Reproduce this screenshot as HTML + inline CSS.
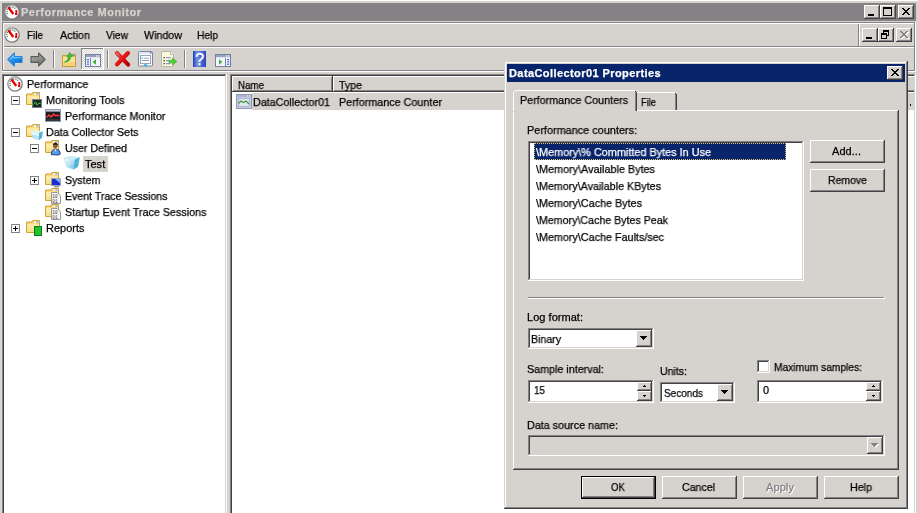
<!DOCTYPE html>
<html><head><meta charset="utf-8"><title>Performance Monitor</title>
<style>
html,body{margin:0;padding:0}
body{width:918px;height:513px;overflow:hidden;position:relative;background:#D6D3CE;font-family:"Liberation Sans",sans-serif;font-size:11px;line-height:13px}
div,span,svg{position:absolute;display:block}
span{white-space:pre;height:13px;will-change:transform;-webkit-text-stroke-width:0.25px}
</style></head><body>
<div style="left:0px;top:0px;width:918px;height:513px;background:#D6D3CE;"></div>
<div style="left:0px;top:0px;width:918px;height:1px;background:#FFFFFF;"></div>
<div style="left:1px;top:1px;width:1px;height:512px;background:#DDDAD5;"></div>
<div style="left:2px;top:3px;width:914px;height:18px;background:#848284;"></div>
<svg style="left:4px;top:4px" width="16" height="16" viewBox="0 0 16 16" ><defs><linearGradient id="pr" x1="0" y1="0" x2="1" y2="1"><stop offset="0" stop-color="#9a9a9a"/><stop offset="1" stop-color="#6a6a6a"/></linearGradient></defs>
<circle cx="8" cy="8" r="7.1" fill="#fff" stroke="url(#pr)" stroke-width="1.5"/><circle cx="8" cy="8" r="6.2" fill="none" stroke="#e9e9e9" stroke-width=".7"/>
<path d="M3.5 10.2 A4.6 4.6 0 0 1 11.8 5.4" fill="none" stroke="#4a8866" stroke-width="1.4" stroke-dasharray="1.1 1"/>
<path d="M4.4 3.3 L9.3 10" fill="none" stroke="#e60000" stroke-width="2.3"/><path d="M12.3 6 V10.2 H11" fill="none" stroke="#e60000" stroke-width="1.8"/></svg>
<span style="left:21px;top:6px;color:#D6D3CE;letter-spacing:0.519px;font-weight:bold;">Performance Monitor</span>
<div style="left:864px;top:5px;width:16px;height:14px;background:#D6D3CE;"></div>
<div style="left:864px;top:5px;width:16px;height:1px;background:#FFFFFF;"></div>
<div style="left:864px;top:5px;width:1px;height:14px;background:#FFFFFF;"></div>
<div style="left:864px;top:18px;width:16px;height:1px;background:#424142;"></div>
<div style="left:879px;top:5px;width:1px;height:14px;background:#424142;"></div>
<div style="left:865px;top:6px;width:14px;height:1px;background:#D6D3CE;"></div>
<div style="left:865px;top:6px;width:1px;height:12px;background:#D6D3CE;"></div>
<div style="left:865px;top:17px;width:14px;height:1px;background:#848284;"></div>
<div style="left:878px;top:6px;width:1px;height:12px;background:#848284;"></div>
<div style="left:868px;top:14px;width:6px;height:2px;background:#000;"></div>
<div style="left:880px;top:5px;width:16px;height:14px;background:#D6D3CE;"></div>
<div style="left:880px;top:5px;width:16px;height:1px;background:#FFFFFF;"></div>
<div style="left:880px;top:5px;width:1px;height:14px;background:#FFFFFF;"></div>
<div style="left:880px;top:18px;width:16px;height:1px;background:#424142;"></div>
<div style="left:895px;top:5px;width:1px;height:14px;background:#424142;"></div>
<div style="left:881px;top:6px;width:14px;height:1px;background:#D6D3CE;"></div>
<div style="left:881px;top:6px;width:1px;height:12px;background:#D6D3CE;"></div>
<div style="left:881px;top:17px;width:14px;height:1px;background:#848284;"></div>
<div style="left:894px;top:6px;width:1px;height:12px;background:#848284;"></div>
<div style="left:883px;top:7px;width:9px;height:9px;background:#000;"></div>
<div style="left:884px;top:9px;width:7px;height:6px;background:#D6D3CE;"></div>
<div style="left:898px;top:5px;width:16px;height:14px;background:#D6D3CE;"></div>
<div style="left:898px;top:5px;width:16px;height:1px;background:#FFFFFF;"></div>
<div style="left:898px;top:5px;width:1px;height:14px;background:#FFFFFF;"></div>
<div style="left:898px;top:18px;width:16px;height:1px;background:#424142;"></div>
<div style="left:913px;top:5px;width:1px;height:14px;background:#424142;"></div>
<div style="left:899px;top:6px;width:14px;height:1px;background:#D6D3CE;"></div>
<div style="left:899px;top:6px;width:1px;height:12px;background:#D6D3CE;"></div>
<div style="left:899px;top:17px;width:14px;height:1px;background:#848284;"></div>
<div style="left:912px;top:6px;width:1px;height:12px;background:#848284;"></div>
<svg style="left:902px;top:8px" width="8" height="7" viewBox="0 0 8 7" shape-rendering="crispEdges"><path d="M0 0h2v1h1v1h2v-1h1v-1h2v1h-1v1h-1v1h-1v1h1v1h1v1h1v1h-2v-1h-1v-1h-2v1h-1v1h-2v-1h1v-1h1v-1h1v-1h-1v-1h-1v-1h-1z" fill="#000"/></svg>
<div style="left:2px;top:22px;width:914px;height:1px;background:#848284;"></div>
<div style="left:3px;top:23px;width:912px;height:1px;background:#FFFFFF;"></div>
<div style="left:2px;top:22px;width:1px;height:49px;background:#848284;"></div>
<div style="left:3px;top:23px;width:1px;height:47px;background:#FFFFFF;"></div>
<div style="left:914px;top:23px;width:1px;height:48px;background:#848284;"></div>
<div style="left:915px;top:22px;width:1px;height:50px;background:#FFFFFF;"></div>
<div style="left:4px;top:46px;width:910px;height:1px;background:#848284;"></div>
<div style="left:3px;top:47px;width:911px;height:1px;background:#FFFFFF;"></div>
<div style="left:2px;top:70px;width:913px;height:1px;background:#848284;"></div>
<div style="left:2px;top:71px;width:914px;height:1px;background:#FFFFFF;"></div>
<div style="left:858px;top:24px;width:1px;height:22px;background:#848284;"></div>
<div style="left:859px;top:24px;width:1px;height:22px;background:#FFFFFF;"></div>
<div style="left:862px;top:28px;width:16px;height:14px;background:#D6D3CE;"></div>
<div style="left:862px;top:28px;width:16px;height:1px;background:#FFFFFF;"></div>
<div style="left:862px;top:28px;width:1px;height:14px;background:#FFFFFF;"></div>
<div style="left:862px;top:41px;width:16px;height:1px;background:#424142;"></div>
<div style="left:877px;top:28px;width:1px;height:14px;background:#424142;"></div>
<div style="left:863px;top:29px;width:14px;height:1px;background:#D6D3CE;"></div>
<div style="left:863px;top:29px;width:1px;height:12px;background:#D6D3CE;"></div>
<div style="left:863px;top:40px;width:14px;height:1px;background:#848284;"></div>
<div style="left:876px;top:29px;width:1px;height:12px;background:#848284;"></div>
<div style="left:866px;top:37px;width:6px;height:2px;background:#000;"></div>
<div style="left:878px;top:28px;width:16px;height:14px;background:#D6D3CE;"></div>
<div style="left:878px;top:28px;width:16px;height:1px;background:#FFFFFF;"></div>
<div style="left:878px;top:28px;width:1px;height:14px;background:#FFFFFF;"></div>
<div style="left:878px;top:41px;width:16px;height:1px;background:#424142;"></div>
<div style="left:893px;top:28px;width:1px;height:14px;background:#424142;"></div>
<div style="left:879px;top:29px;width:14px;height:1px;background:#D6D3CE;"></div>
<div style="left:879px;top:29px;width:1px;height:12px;background:#D6D3CE;"></div>
<div style="left:879px;top:40px;width:14px;height:1px;background:#848284;"></div>
<div style="left:892px;top:29px;width:1px;height:12px;background:#848284;"></div>
<div style="left:883px;top:30px;width:6px;height:6px;background:#000;"></div>
<div style="left:884px;top:32px;width:4px;height:3px;background:#D6D3CE;"></div>
<div style="left:881px;top:33px;width:6px;height:6px;background:#000;"></div>
<div style="left:882px;top:35px;width:4px;height:3px;background:#D6D3CE;"></div>
<div style="left:896px;top:28px;width:16px;height:14px;background:#D6D3CE;"></div>
<div style="left:896px;top:28px;width:16px;height:1px;background:#FFFFFF;"></div>
<div style="left:896px;top:28px;width:1px;height:14px;background:#FFFFFF;"></div>
<div style="left:896px;top:41px;width:16px;height:1px;background:#424142;"></div>
<div style="left:911px;top:28px;width:1px;height:14px;background:#424142;"></div>
<div style="left:897px;top:29px;width:14px;height:1px;background:#D6D3CE;"></div>
<div style="left:897px;top:29px;width:1px;height:12px;background:#D6D3CE;"></div>
<div style="left:897px;top:40px;width:14px;height:1px;background:#848284;"></div>
<div style="left:910px;top:29px;width:1px;height:12px;background:#848284;"></div>
<svg style="left:901px;top:32px" width="8" height="7" viewBox="0 0 8 7" shape-rendering="crispEdges"><path d="M0 0h2v1h1v1h2v-1h1v-1h2v1h-1v1h-1v1h-1v1h1v1h1v1h1v1h-2v-1h-1v-1h-2v1h-1v1h-2v-1h1v-1h1v-1h1v-1h-1v-1h-1v-1h-1z" fill="#FFFFFF"/></svg>
<svg style="left:900px;top:31px" width="8" height="7" viewBox="0 0 8 7" shape-rendering="crispEdges"><path d="M0 0h2v1h1v1h2v-1h1v-1h2v1h-1v1h-1v1h-1v1h1v1h1v1h1v1h-2v-1h-1v-1h-2v1h-1v1h-2v-1h1v-1h1v-1h1v-1h-1v-1h-1v-1h-1z" fill="#848284"/></svg>
<svg style="left:4px;top:27px" width="16" height="16" viewBox="0 0 16 16" ><defs><linearGradient id="pr" x1="0" y1="0" x2="1" y2="1"><stop offset="0" stop-color="#9a9a9a"/><stop offset="1" stop-color="#6a6a6a"/></linearGradient></defs>
<circle cx="8" cy="8" r="7.1" fill="#fff" stroke="url(#pr)" stroke-width="1.5"/><circle cx="8" cy="8" r="6.2" fill="none" stroke="#e9e9e9" stroke-width=".7"/>
<path d="M3.5 10.2 A4.6 4.6 0 0 1 11.8 5.4" fill="none" stroke="#4a8866" stroke-width="1.4" stroke-dasharray="1.1 1"/>
<path d="M4.4 3.3 L9.3 10" fill="none" stroke="#e60000" stroke-width="2.3"/><path d="M12.3 6 V10.2 H11" fill="none" stroke="#e60000" stroke-width="1.8"/></svg>
<span style="left:27px;top:29px;color:#000;transform-origin:0 0;transform:scaleX(0.9022);">File</span>
<span style="left:60px;top:29px;color:#000;transform-origin:0 0;transform:scaleX(0.9811);">Action</span>
<span style="left:106px;top:29px;color:#000;transform-origin:0 0;transform:scaleX(0.9300);">View</span>
<span style="left:144px;top:29px;color:#000;transform-origin:0 0;transform:scaleX(0.9712);">Window</span>
<span style="left:197px;top:29px;color:#000;transform-origin:0 0;transform:scaleX(0.9282);">Help</span>
<svg style="left:7px;top:52px" width="16" height="15" viewBox="0 0 16 15" ><defs><linearGradient id="gb" x1="0" y1="0" x2="0.6" y2="1"><stop offset="0" stop-color="#8fd8ff"/><stop offset=".55" stop-color="#1f93f0"/><stop offset="1" stop-color="#0a5ec4"/></linearGradient></defs>
<path d="M0.8 7.5 L7.4 1 V4.6 H15 V10.4 H7.4 V14 Z" fill="url(#gb)" stroke="#2a86d8" stroke-width="1.1" stroke-linejoin="round"/><path d="M2.6 7.5 L6.4 3.8 V5.7 H13.8" fill="none" stroke="#a8e2ff" stroke-width=".8" opacity=".8"/></svg>
<svg style="left:30px;top:52px" width="16" height="15" viewBox="0 0 16 15" ><defs><linearGradient id="gg" x1="0" y1="0" x2="0.4" y2="1"><stop offset="0" stop-color="#c4c4c4"/><stop offset=".6" stop-color="#8c8c8c"/><stop offset="1" stop-color="#767676"/></linearGradient></defs>
<path d="M15.2 7.5 L8.6 1 V4.6 H1 V10.4 H8.6 V14 Z" fill="url(#gg)" stroke="#5a5a5a" stroke-width="1.1" stroke-linejoin="round"/></svg>
<div style="left:53px;top:50px;width:1px;height:18px;background:#848284;"></div>
<div style="left:54px;top:50px;width:1px;height:18px;background:#FFFFFF;"></div>
<svg style="left:62px;top:51px" width="16" height="17" viewBox="0 0 16 17" ><path d="M0.5 4.5 H8 L9 3.3 H13.5 V15.5 H0.5Z" fill="#f1cb66" stroke="#c99a35"/><path d="M1 6 H13 V15 H1Z" fill="#f9e29a"/><path d="M1 11 H13 V15 H1Z" fill="#f4d57e"/>
<rect x="10" y="4" width="2.6" height="1.3" fill="#4a90e2"/>
<path d="M2.4 11 C4.8 10.2 6.2 8.6 6.4 5.8 L4.8 6 L7.6 1.4 L10.2 5.4 L8.8 5.4 C8.8 9 6 11.2 2.4 11Z" fill="#3cc43c" stroke="#229922" stroke-width=".6"/></svg>
<div style="left:81px;top:48px;width:23px;height:22px;background-color:#D6D3CE;background-image:conic-gradient(#fff 25%,#D6D3CE 0 50%,#fff 0 75%,#D6D3CE 0);background-size:2px 2px"></div>
<div style="left:81px;top:48px;width:23px;height:1px;background:#848284;"></div>
<div style="left:81px;top:48px;width:1px;height:22px;background:#848284;"></div>
<div style="left:81px;top:69px;width:23px;height:1px;background:#FFFFFF;"></div>
<div style="left:103px;top:48px;width:1px;height:22px;background:#FFFFFF;"></div>
<svg style="left:85px;top:54px" width="16" height="13" viewBox="0 0 16 13" ><rect x="0.5" y="0.5" width="15" height="12" fill="#f4f4fa" stroke="#74829f"/><rect x="1" y="1" width="14" height="2.2" fill="#96a3bf"/><rect x="1" y="3.2" width="14" height="1" fill="#dfe4ee"/>
<rect x="11" y="1.4" width="1.2" height="1.2" fill="#fff"/><rect x="13" y="1.4" width="1.2" height="1.2" fill="#fff"/><line x1="5.5" y1="4" x2="5.5" y2="12" stroke="#74829f"/><rect x="1.8" y="5" width="2.2" height="1.3" fill="#3d7fd6"/><rect x="1.8" y="7.3" width="2.2" height="1.3" fill="#3d7fd6"/><rect x="1.8" y="9.6" width="2.2" height="1.3" fill="#3d7fd6"/><path d="M11 5.2 L7.6 8 L11 10.8Z" fill="#35b535"/></svg>
<div style="left:107px;top:50px;width:1px;height:18px;background:#848284;"></div>
<div style="left:108px;top:50px;width:1px;height:18px;background:#FFFFFF;"></div>
<svg style="left:114px;top:50px" width="18" height="18" viewBox="0 0 18 18" ><defs><linearGradient id="rx" x1="0" y1="0" x2="1" y2="1"><stop offset="0" stop-color="#ff5a5a"/><stop offset=".5" stop-color="#ee1010"/><stop offset="1" stop-color="#a80000"/></linearGradient></defs>
<path d="M3 3.2 L14.2 14.6 M14 3 L3 14.4" fill="none" stroke="#b40a0a" stroke-width="4" stroke-linecap="round"/><path d="M3 3.2 L14.2 14.6 M14 3 L3 14.4" fill="none" stroke="url(#rx)" stroke-width="2.9" stroke-linecap="round"/></svg>
<svg style="left:138px;top:51px" width="15" height="16" viewBox="0 0 15 16" ><rect x="0.5" y="0.5" width="14" height="14.5" rx="1" fill="#fafafc" stroke="#7a86a2"/><rect x="1" y="1" width="13" height="2" fill="#e2e6ef"/><rect x="12" y="1" width="1.5" height="1.5" fill="#5a6fb0"/>
<rect x="2.5" y="4.5" width="10" height="8" fill="#fff" stroke="#9aa3b8"/><rect x="3.5" y="6.5" width="1.3" height="1.3" fill="#18b4ff"/><rect x="6" y="6.7" width="5" height="1" fill="#9aa3b8"/><rect x="4" y="9" width="7" height="1" fill="#9aa3b8"/><rect x="6" y="13.3" width="3" height="1.7" fill="#18b4ff"/></svg>
<svg style="left:161px;top:51px" width="17" height="16" viewBox="0 0 17 16" ><path d="M0.5 0.5 h9 l3 3 v12 h-12z" fill="#fbf7dc" stroke="#b9b9a8"/><path d="M9.5 0.5 v3 h3" fill="#fff" stroke="#b9b9a8"/>
<rect x="2.5" y="6" width="1.3" height="1.3" fill="#333"/><rect x="2.5" y="9" width="1.3" height="1.3" fill="#333"/><rect x="2.5" y="12" width="1.3" height="1.3" fill="#333"/>
<rect x="5" y="6.2" width="4.5" height="1" fill="#7a7fb8"/><rect x="5" y="9.2" width="3" height="1" fill="#7a7fb8"/><rect x="5" y="12.2" width="4.5" height="1" fill="#7a7fb8"/>
<path d="M8 9.2 h3.6 v-2.2 l4.2 3.5 l-4.2 3.5 v-2.2 h-3.6z" fill="#4fd33a" stroke="#2fa51f" stroke-width=".6"/></svg>
<div style="left:184px;top:50px;width:1px;height:18px;background:#848284;"></div>
<div style="left:185px;top:50px;width:1px;height:18px;background:#FFFFFF;"></div>
<svg style="left:193px;top:51px" width="13" height="16" viewBox="0 0 13 16" ><defs><linearGradient id="gh" x1="0" y1="0" x2="1" y2="0"><stop offset="0" stop-color="#1d3fb0"/><stop offset=".3" stop-color="#6f8fe6"/><stop offset="1" stop-color="#2347c0"/></linearGradient></defs>
<rect width="13" height="16" fill="url(#gh)"/><text x="6.6" y="14" font-family="Liberation Sans" font-weight="normal" font-size="16.5" fill="#fff" stroke="#fff" stroke-width=".35" text-anchor="middle">?</text></svg>
<svg style="left:215px;top:54px" width="16" height="13" viewBox="0 0 16 13" ><rect x="0.5" y="0.5" width="15" height="12" fill="#f4f4fa" stroke="#74829f"/><rect x="1" y="1" width="14" height="2.2" fill="#96a3bf"/><rect x="1" y="3.2" width="14" height="1" fill="#dfe4ee"/>
<rect x="11" y="1.4" width="1.2" height="1.2" fill="#fff"/><rect x="13" y="1.4" width="1.2" height="1.2" fill="#fff"/><line x1="10.5" y1="4" x2="10.5" y2="12" stroke="#74829f"/><rect x="12" y="5" width="2.2" height="1.3" fill="#3d7fd6"/><rect x="12" y="7.3" width="2.2" height="1.3" fill="#3d7fd6"/><rect x="12" y="9.6" width="2.2" height="1.3" fill="#3d7fd6"/><path d="M4 5.2 L7.4 8 L4 10.8Z" fill="#35b535"/></svg>
<div style="left:2px;top:74px;width:225px;height:460px;background:#FFFFFF;"></div>
<div style="left:2px;top:74px;width:225px;height:1px;background:#848284;"></div>
<div style="left:2px;top:74px;width:1px;height:460px;background:#848284;"></div>
<div style="left:2px;top:533px;width:225px;height:1px;background:#FFFFFF;"></div>
<div style="left:226px;top:74px;width:1px;height:460px;background:#FFFFFF;"></div>
<div style="left:3px;top:75px;width:223px;height:1px;background:#424142;"></div>
<div style="left:3px;top:75px;width:1px;height:458px;background:#424142;"></div>
<div style="left:3px;top:532px;width:223px;height:1px;background:#D6D3CE;"></div>
<div style="left:225px;top:75px;width:1px;height:458px;background:#D6D3CE;"></div>
<div style="left:230px;top:74px;width:686px;height:460px;background:#FFFFFF;"></div>
<div style="left:230px;top:74px;width:686px;height:1px;background:#848284;"></div>
<div style="left:230px;top:74px;width:1px;height:460px;background:#848284;"></div>
<div style="left:230px;top:533px;width:686px;height:1px;background:#FFFFFF;"></div>
<div style="left:915px;top:74px;width:1px;height:460px;background:#FFFFFF;"></div>
<div style="left:231px;top:75px;width:684px;height:1px;background:#424142;"></div>
<div style="left:231px;top:75px;width:1px;height:458px;background:#424142;"></div>
<div style="left:231px;top:532px;width:684px;height:1px;background:#D6D3CE;"></div>
<div style="left:914px;top:75px;width:1px;height:458px;background:#D6D3CE;"></div>
<svg style="left:7px;top:76px" width="16" height="16" viewBox="0 0 16 16" ><defs><linearGradient id="pr" x1="0" y1="0" x2="1" y2="1"><stop offset="0" stop-color="#9a9a9a"/><stop offset="1" stop-color="#6a6a6a"/></linearGradient></defs>
<circle cx="8" cy="8" r="7.1" fill="#fff" stroke="url(#pr)" stroke-width="1.5"/><circle cx="8" cy="8" r="6.2" fill="none" stroke="#e9e9e9" stroke-width=".7"/>
<path d="M3.5 10.2 A4.6 4.6 0 0 1 11.8 5.4" fill="none" stroke="#4a8866" stroke-width="1.4" stroke-dasharray="1.1 1"/>
<path d="M4.4 3.3 L9.3 10" fill="none" stroke="#e60000" stroke-width="2.3"/><path d="M12.3 6 V10.2 H11" fill="none" stroke="#e60000" stroke-width="1.8"/></svg>
<span style="left:27px;top:78px;color:#000;transform-origin:0 0;transform:scaleX(0.9748);">Performance</span>
<div style="left:11px;top:96px;width:9px;height:9px;background:#FFFFFF;"></div>
<div style="left:11px;top:96px;width:9px;height:1px;background:#848284;"></div>
<div style="left:11px;top:96px;width:1px;height:9px;background:#848284;"></div>
<div style="left:11px;top:104px;width:9px;height:1px;background:#848284;"></div>
<div style="left:19px;top:96px;width:1px;height:9px;background:#848284;"></div>
<div style="left:13px;top:100px;width:5px;height:1px;background:#000;"></div>
<svg style="left:26px;top:92px" width="16" height="16" viewBox="0 0 16 16" ><path d="M0.5 2 H6 L6.8 0.5 H13.5 V12.5 H0.5 Z" fill="#f4cf6a" stroke="#d2a338"/>
<rect x="8.4" y="1.3" width="4.4" height="1.7" fill="#fff"/><rect x="10.2" y="1.5" width="2.2" height="1.1" fill="#3a8ee6"/>
<path d="M1 3.6 H13 V12 H1Z" fill="#fbe9a6"/><path d="M1 8.5 H13 V12 H1Z" fill="#f8df8e"/></svg>
<svg style="left:32px;top:99px" width="10" height="9" viewBox="0 0 10 9" ><rect x=".5" y=".5" width="9" height="8" fill="#1d2a22" stroke="#6f7f8f"/><path d="M1.5 5.5 L3.5 3 L5 6 L6.5 4.5 L8.5 4.5" fill="none" stroke="#35d24a" stroke-width="1"/></svg>
<span style="left:46px;top:94px;color:#000;transform-origin:0 0;transform:scaleX(0.9811);">Monitoring Tools</span>
<svg style="left:45px;top:109px" width="16" height="13" viewBox="0 0 16 13" ><rect x=".5" y=".5" width="15" height="12" fill="#1d1d22" stroke="#8e9bb5"/><rect x="1" y="1" width="14" height="1.6" fill="#c8d0e0"/><path d="M1.5 8.5 L4 6 L6 8 L8.5 5 L10 6.5 L14.5 6.5" fill="none" stroke="#ff3a3a" stroke-width="1.3"/><rect x="2" y="10.5" width="12" height="1" fill="#555"/></svg>
<span style="left:65px;top:110px;color:#000;transform-origin:0 0;transform:scaleX(0.9774);">Performance Monitor</span>
<div style="left:11px;top:128px;width:9px;height:9px;background:#FFFFFF;"></div>
<div style="left:11px;top:128px;width:9px;height:1px;background:#848284;"></div>
<div style="left:11px;top:128px;width:1px;height:9px;background:#848284;"></div>
<div style="left:11px;top:136px;width:9px;height:1px;background:#848284;"></div>
<div style="left:19px;top:128px;width:1px;height:9px;background:#848284;"></div>
<div style="left:13px;top:132px;width:5px;height:1px;background:#000;"></div>
<svg style="left:26px;top:124px" width="16" height="16" viewBox="0 0 16 16" ><path d="M0.5 2 H6 L6.8 0.5 H13.5 V12.5 H0.5 Z" fill="#f4cf6a" stroke="#d2a338"/>
<rect x="8.4" y="1.3" width="4.4" height="1.7" fill="#fff"/><rect x="10.2" y="1.5" width="2.2" height="1.1" fill="#3a8ee6"/>
<path d="M1 3.6 H13 V12 H1Z" fill="#fbe9a6"/><path d="M1 8.5 H13 V12 H1Z" fill="#f8df8e"/></svg>
<svg style="left:31px;top:130px" width="12" height="11" viewBox="0 0 12 11" ><path d="M0 1.6 L4.5 0.5 L12 1.2 L8 3Z" fill="#dff4fb"/><path d="M8 3 L12 1.2 L10.8 8 L7.6 10.2Z" fill="#4fb0d6"/><path d="M0 1.6 L8 3 L7.6 10.2 L1.8 8.2Z" fill="#b5e3f3"/><path d="M0 1.6 L8 3 L7.8 6 L0.8 4.5Z" fill="#e6f7fc"/></svg>
<span style="left:46px;top:126px;color:#000;transform-origin:0 0;transform:scaleX(0.9750);">Data Collector Sets</span>
<div style="left:30px;top:144px;width:9px;height:9px;background:#FFFFFF;"></div>
<div style="left:30px;top:144px;width:9px;height:1px;background:#848284;"></div>
<div style="left:30px;top:144px;width:1px;height:9px;background:#848284;"></div>
<div style="left:30px;top:152px;width:9px;height:1px;background:#848284;"></div>
<div style="left:38px;top:144px;width:1px;height:9px;background:#848284;"></div>
<div style="left:32px;top:148px;width:5px;height:1px;background:#000;"></div>
<svg style="left:45px;top:140px" width="16" height="16" viewBox="0 0 16 16" ><path d="M0.5 2 H6 L6.8 0.5 H13.5 V12.5 H0.5 Z" fill="#f4cf6a" stroke="#d2a338"/>
<rect x="8.4" y="1.3" width="4.4" height="1.7" fill="#fff"/><rect x="10.2" y="1.5" width="2.2" height="1.1" fill="#3a8ee6"/>
<path d="M1 3.6 H13 V12 H1Z" fill="#fbe9a6"/><path d="M1 8.5 H13 V12 H1Z" fill="#f8df8e"/></svg>
<svg style="left:50px;top:141px" width="11" height="15" viewBox="0 0 11 15" ><ellipse cx="5.3" cy="4.6" rx="2.3" ry="2.9" fill="#8a5a3c"/><path d="M3 3.4 Q5.3 -0.6 7.8 3.6 L7.4 4.4 Q5 2.6 3.2 4.2Z" fill="#1c1c1c"/><path d="M1.3 13.6 Q1.3 8.2 5.5 8.2 Q9.8 8.2 10.3 12 Q10.3 13.6 8.8 14 Z" fill="#5a9be6" stroke="#15306e" stroke-width=".9"/><path d="M4.3 8.4 L5.4 10.6 L6.6 8.4Z" fill="#fff"/></svg>
<span style="left:65px;top:142px;color:#000;transform-origin:0 0;transform:scaleX(0.9657);">User Defined</span>
<svg style="left:64px;top:156px" width="16" height="16" viewBox="0 0 16 16" ><defs><linearGradient id="cf" x1="0" y1="0" x2="1" y2="1"><stop offset="0" stop-color="#f4fbfe"/><stop offset=".45" stop-color="#c4e8f5"/><stop offset="1" stop-color="#6cc2e2"/></linearGradient></defs>
<path d="M0.5 2.2 L6 0.8 L15.5 1.6 L13.9 10.6 L9.8 13.2 L2.6 10.6Z" fill="#bfe6f4" stroke="#9ad6ea" stroke-width=".8"/><path d="M0.5 2.2 L6 0.8 L15.5 1.6 L10.4 3.8 Z" fill="#cdecf7"/><path d="M10.4 3.8 L15.5 1.6 L13.9 10.6 L9.8 13.2 Z" fill="#4fb0d6"/><path d="M0.5 2.2 L10.4 3.8 L9.8 13.2 L2.6 10.6Z" fill="url(#cf)"/></svg>
<div style="left:83px;top:156px;width:25px;height:16px;background:#D6D3CE;"></div>
<span style="left:85px;top:158px;color:#000;letter-spacing:0.003px;">Test</span>
<div style="left:30px;top:176px;width:9px;height:9px;background:#FFFFFF;"></div>
<div style="left:30px;top:176px;width:9px;height:1px;background:#848284;"></div>
<div style="left:30px;top:176px;width:1px;height:9px;background:#848284;"></div>
<div style="left:30px;top:184px;width:9px;height:1px;background:#848284;"></div>
<div style="left:38px;top:176px;width:1px;height:9px;background:#848284;"></div>
<div style="left:32px;top:180px;width:5px;height:1px;background:#000;"></div>
<div style="left:34px;top:178px;width:1px;height:5px;background:#000;"></div>
<svg style="left:45px;top:172px" width="16" height="16" viewBox="0 0 16 16" ><path d="M0.5 2 H6 L6.8 0.5 H13.5 V12.5 H0.5 Z" fill="#f4cf6a" stroke="#d2a338"/>
<rect x="8.4" y="1.3" width="4.4" height="1.7" fill="#fff"/><rect x="10.2" y="1.5" width="2.2" height="1.1" fill="#3a8ee6"/>
<path d="M1 3.6 H13 V12 H1Z" fill="#fbe9a6"/><path d="M1 8.5 H13 V12 H1Z" fill="#f8df8e"/></svg>
<svg style="left:51px;top:178px" width="11" height="10" viewBox="0 0 11 10" ><rect x=".5" y=".5" width="9" height="7" fill="#1a2fd0" stroke="#9aa3b8"/><path d="M4 1 L9 1 L9 5Z" fill="#8fb4ff"/><rect x="3" y="8" width="5" height="1.5" fill="#9a9a9a"/></svg>
<span style="left:65px;top:174px;color:#000;transform-origin:0 0;transform:scaleX(0.9649);">System</span>
<svg style="left:45px;top:188px" width="16" height="16" viewBox="0 0 16 16" ><path d="M0.5 2 H6 L6.8 0.5 H13.5 V12.5 H0.5 Z" fill="#f4cf6a" stroke="#d2a338"/>
<rect x="8.4" y="1.3" width="4.4" height="1.7" fill="#fff"/><rect x="10.2" y="1.5" width="2.2" height="1.1" fill="#3a8ee6"/>
<path d="M1 3.6 H13 V12 H1Z" fill="#fbe9a6"/><path d="M1 8.5 H13 V12 H1Z" fill="#f8df8e"/></svg>
<svg style="left:51px;top:192px" width="10" height="12" viewBox="0 0 10 12" ><path d="M.5 .5 h6 l3 3 v8 h-9z" fill="#f4f4f4" stroke="#9a9a9a"/><text x="1.3" y="6" font-size="4.5" font-family="Liberation Mono" fill="#444">10</text><text x="1.3" y="10.5" font-size="4.5" font-family="Liberation Mono" fill="#444">01</text></svg>
<span style="left:65px;top:190px;color:#000;transform-origin:0 0;transform:scaleX(0.9625);">Event Trace Sessions</span>
<svg style="left:45px;top:204px" width="16" height="16" viewBox="0 0 16 16" ><path d="M0.5 2 H6 L6.8 0.5 H13.5 V12.5 H0.5 Z" fill="#f4cf6a" stroke="#d2a338"/>
<rect x="8.4" y="1.3" width="4.4" height="1.7" fill="#fff"/><rect x="10.2" y="1.5" width="2.2" height="1.1" fill="#3a8ee6"/>
<path d="M1 3.6 H13 V12 H1Z" fill="#fbe9a6"/><path d="M1 8.5 H13 V12 H1Z" fill="#f8df8e"/></svg>
<svg style="left:51px;top:208px" width="10" height="12" viewBox="0 0 10 12" ><path d="M.5 .5 h6 l3 3 v8 h-9z" fill="#f4f4f4" stroke="#9a9a9a"/><text x="1.3" y="6" font-size="4.5" font-family="Liberation Mono" fill="#444">10</text><text x="1.3" y="10.5" font-size="4.5" font-family="Liberation Mono" fill="#444">01</text></svg>
<span style="left:65px;top:206px;color:#000;transform-origin:0 0;transform:scaleX(0.9757);">Startup Event Trace Sessions</span>
<div style="left:11px;top:224px;width:9px;height:9px;background:#FFFFFF;"></div>
<div style="left:11px;top:224px;width:9px;height:1px;background:#848284;"></div>
<div style="left:11px;top:224px;width:1px;height:9px;background:#848284;"></div>
<div style="left:11px;top:232px;width:9px;height:1px;background:#848284;"></div>
<div style="left:19px;top:224px;width:1px;height:9px;background:#848284;"></div>
<div style="left:13px;top:228px;width:5px;height:1px;background:#000;"></div>
<div style="left:15px;top:226px;width:1px;height:5px;background:#000;"></div>
<svg style="left:26px;top:220px" width="16" height="16" viewBox="0 0 16 16" ><path d="M0.5 2 H6 L6.8 0.5 H13.5 V12.5 H0.5 Z" fill="#f4cf6a" stroke="#d2a338"/>
<rect x="8.4" y="1.3" width="4.4" height="1.7" fill="#fff"/><rect x="10.2" y="1.5" width="2.2" height="1.1" fill="#3a8ee6"/>
<path d="M1 3.6 H13 V12 H1Z" fill="#fbe9a6"/><path d="M1 8.5 H13 V12 H1Z" fill="#f8df8e"/></svg>
<svg style="left:34px;top:226px" width="8" height="10" viewBox="0 0 8 10" ><rect x=".5" y=".5" width="7" height="9" fill="#1fc32f" stroke="#0d7a18"/></svg>
<span style="left:46px;top:222px;color:#000;transform-origin:0 0;transform:scaleX(0.9966);">Reports</span>
<div style="left:232px;top:76px;width:101px;height:16px;background:#D6D3CE;"></div>
<div style="left:232px;top:76px;width:101px;height:1px;background:#FFFFFF;"></div>
<div style="left:232px;top:76px;width:1px;height:16px;background:#FFFFFF;"></div>
<div style="left:232px;top:91px;width:101px;height:1px;background:#424142;"></div>
<div style="left:332px;top:76px;width:1px;height:16px;background:#424142;"></div>
<div style="left:233px;top:90px;width:99px;height:1px;background:#848284;"></div>
<div style="left:331px;top:77px;width:1px;height:14px;background:#848284;"></div>
<span style="left:238px;top:79px;color:#000;transform-origin:0 0;transform:scaleX(0.8860);">Name</span>
<div style="left:333px;top:76px;width:600px;height:16px;background:#D6D3CE;"></div>
<div style="left:333px;top:76px;width:600px;height:1px;background:#FFFFFF;"></div>
<div style="left:333px;top:76px;width:1px;height:16px;background:#FFFFFF;"></div>
<div style="left:333px;top:91px;width:600px;height:1px;background:#424142;"></div>
<div style="left:932px;top:76px;width:1px;height:16px;background:#424142;"></div>
<div style="left:334px;top:90px;width:598px;height:1px;background:#848284;"></div>
<div style="left:931px;top:77px;width:1px;height:14px;background:#848284;"></div>
<span style="left:339px;top:79px;color:#000;transform-origin:0 0;transform:scaleX(0.9640);">Type</span>
<div style="left:914px;top:76px;width:1px;height:17px;background:#D6D3CE;"></div>
<div style="left:915px;top:76px;width:1px;height:17px;background:#FFFFFF;"></div>
<div style="left:916px;top:76px;width:2px;height:17px;background:#D6D3CE;"></div>
<div style="left:252px;top:93px;width:662px;height:17px;background:#D6D3CE;"></div>
<div style="left:910px;top:104px;width:1px;height:2px;background:#000;"></div>
<svg style="left:236px;top:94px" width="16" height="16" viewBox="0 0 16 16" ><rect x=".5" y=".5" width="15" height="14" fill="#c6cde0" stroke="#8e9bb5"/><rect x="1" y="1" width="14" height="2" fill="#aab4cf"/><rect x="2.5" y="4.5" width="11" height="8" fill="#d8deec" stroke="#9aa6c4" stroke-width=".6"/><path d="M5 5v7M8 5v7M11 5v7" stroke="#eef1f8" stroke-width="1"/><path d="M2.5 9.5 L5 7 L7.5 8.5 L10 7 L13 10" fill="none" stroke="#3e9a3e" stroke-width="1.2"/><rect x="11" y="1.4" width="1" height="1" fill="#fff"/><rect x="13" y="1.4" width="1" height="1" fill="#fff"/></svg>
<span style="left:253px;top:96px;color:#000;transform-origin:0 0;transform:scaleX(0.9762);">DataCollector01</span>
<span style="left:339px;top:96px;color:#000;transform-origin:0 0;transform:scaleX(0.9793);">Performance Counter</span>
<div style="left:504px;top:61px;width:404px;height:448px;background:#D6D3CE;"></div>
<div style="left:504px;top:61px;width:404px;height:1px;background:#D6D3CE;"></div>
<div style="left:504px;top:61px;width:1px;height:448px;background:#D6D3CE;"></div>
<div style="left:504px;top:508px;width:404px;height:1px;background:#424142;"></div>
<div style="left:907px;top:61px;width:1px;height:448px;background:#424142;"></div>
<div style="left:505px;top:62px;width:402px;height:1px;background:#FFFFFF;"></div>
<div style="left:505px;top:62px;width:1px;height:446px;background:#FFFFFF;"></div>
<div style="left:505px;top:507px;width:402px;height:1px;background:#848284;"></div>
<div style="left:906px;top:62px;width:1px;height:446px;background:#848284;"></div>
<div style="left:507px;top:64px;width:398px;height:18px;background:#08246B;"></div>
<span style="left:509px;top:67px;color:#fff;letter-spacing:0.415px;font-weight:bold;">DataCollector01 Properties</span>
<div style="left:887px;top:66px;width:16px;height:14px;background:#D6D3CE;"></div>
<div style="left:887px;top:66px;width:16px;height:1px;background:#FFFFFF;"></div>
<div style="left:887px;top:66px;width:1px;height:14px;background:#FFFFFF;"></div>
<div style="left:887px;top:79px;width:16px;height:1px;background:#424142;"></div>
<div style="left:902px;top:66px;width:1px;height:14px;background:#424142;"></div>
<div style="left:888px;top:67px;width:14px;height:1px;background:#D6D3CE;"></div>
<div style="left:888px;top:67px;width:1px;height:12px;background:#D6D3CE;"></div>
<div style="left:888px;top:78px;width:14px;height:1px;background:#848284;"></div>
<div style="left:901px;top:67px;width:1px;height:12px;background:#848284;"></div>
<svg style="left:891px;top:69px" width="8" height="7" viewBox="0 0 8 7" shape-rendering="crispEdges"><path d="M0 0h2v1h1v1h2v-1h1v-1h2v1h-1v1h-1v1h-1v1h1v1h1v1h1v1h-2v-1h-1v-1h-2v1h-1v1h-2v-1h1v-1h1v-1h1v-1h-1v-1h-1v-1h-1z" fill="#000"/></svg>
<div style="left:513px;top:110px;width:386px;height:1px;background:#FFFFFF;"></div>
<div style="left:513px;top:110px;width:1px;height:360px;background:#FFFFFF;"></div>
<div style="left:513px;top:469px;width:386px;height:1px;background:#424142;"></div>
<div style="left:898px;top:110px;width:1px;height:360px;background:#424142;"></div>
<div style="left:514px;top:111px;width:384px;height:1px;background:#D6D3CE;"></div>
<div style="left:514px;top:111px;width:1px;height:358px;background:#D6D3CE;"></div>
<div style="left:514px;top:468px;width:384px;height:1px;background:#848284;"></div>
<div style="left:897px;top:111px;width:1px;height:358px;background:#848284;"></div>
<div style="left:637px;top:92px;width:38px;height:1px;background:#FFFFFF;"></div>
<div style="left:675px;top:94px;width:1px;height:16px;background:#848284;"></div>
<div style="left:676px;top:94px;width:1px;height:16px;background:#424142;"></div>
<div style="left:675px;top:93px;width:1px;height:1px;background:#424142;"></div>
<span style="left:641px;top:96px;color:#000;transform-origin:0 0;transform:scaleX(0.8458);">File</span>
<div style="left:513px;top:90px;width:124px;height:22px;background:#D6D3CE;"></div>
<div style="left:515px;top:90px;width:120px;height:1px;background:#FFFFFF;"></div>
<div style="left:513px;top:92px;width:1px;height:19px;background:#FFFFFF;"></div>
<div style="left:514px;top:91px;width:1px;height:1px;background:#FFFFFF;"></div>
<div style="left:635px;top:92px;width:1px;height:19px;background:#848284;"></div>
<div style="left:636px;top:92px;width:1px;height:19px;background:#424142;"></div>
<div style="left:635px;top:91px;width:1px;height:1px;background:#424142;"></div>
<span style="left:520px;top:94px;color:#000;transform-origin:0 0;transform:scaleX(0.9759);">Performance Counters</span>
<span style="left:527px;top:124px;color:#000;transform-origin:0 0;transform:scaleX(0.9885);">Performance counters:</span>
<div style="left:528px;top:141px;width:276px;height:140px;background:#FFFFFF;"></div>
<div style="left:528px;top:141px;width:276px;height:1px;background:#848284;"></div>
<div style="left:528px;top:141px;width:1px;height:140px;background:#848284;"></div>
<div style="left:528px;top:280px;width:276px;height:1px;background:#FFFFFF;"></div>
<div style="left:803px;top:141px;width:1px;height:140px;background:#FFFFFF;"></div>
<div style="left:529px;top:142px;width:274px;height:1px;background:#424142;"></div>
<div style="left:529px;top:142px;width:1px;height:138px;background:#424142;"></div>
<div style="left:529px;top:279px;width:274px;height:1px;background:#D6D3CE;"></div>
<div style="left:802px;top:142px;width:1px;height:138px;background:#D6D3CE;"></div>
<div style="left:534px;top:143px;width:252px;height:17px;background:#08246B;"></div>
<div style="left:534px;top:143px;width:250px;height:15px;border:1px dotted #d8c878"></div>
<span style="left:536px;top:146px;color:#fff;transform-origin:0 0;transform:scaleX(0.9871);">\Memory\% Committed Bytes In Use</span>
<span style="left:536px;top:163px;color:#000;transform-origin:0 0;transform:scaleX(0.9846);">\Memory\Available Bytes</span>
<span style="left:536px;top:180px;color:#000;transform-origin:0 0;transform:scaleX(0.9751);">\Memory\Available KBytes</span>
<span style="left:536px;top:197px;color:#000;transform-origin:0 0;transform:scaleX(0.9796);">\Memory\Cache Bytes</span>
<span style="left:536px;top:214px;color:#000;transform-origin:0 0;transform:scaleX(0.9681);">\Memory\Cache Bytes Peak</span>
<span style="left:536px;top:231px;color:#000;transform-origin:0 0;transform:scaleX(0.9784);">\Memory\Cache Faults/sec</span>
<div style="left:810px;top:140px;width:75px;height:23px;background:#D6D3CE;"></div>
<div style="left:810px;top:140px;width:75px;height:1px;background:#FFFFFF;"></div>
<div style="left:810px;top:140px;width:1px;height:23px;background:#FFFFFF;"></div>
<div style="left:810px;top:162px;width:75px;height:1px;background:#424142;"></div>
<div style="left:884px;top:140px;width:1px;height:23px;background:#424142;"></div>
<div style="left:811px;top:141px;width:73px;height:1px;background:#D6D3CE;"></div>
<div style="left:811px;top:141px;width:1px;height:21px;background:#D6D3CE;"></div>
<div style="left:811px;top:161px;width:73px;height:1px;background:#848284;"></div>
<div style="left:883px;top:141px;width:1px;height:21px;background:#848284;"></div>
<span style="left:832px;top:145px;color:#000;letter-spacing:0.042px;">Add...</span>
<div style="left:810px;top:169px;width:75px;height:23px;background:#D6D3CE;"></div>
<div style="left:810px;top:169px;width:75px;height:1px;background:#FFFFFF;"></div>
<div style="left:810px;top:169px;width:1px;height:23px;background:#FFFFFF;"></div>
<div style="left:810px;top:191px;width:75px;height:1px;background:#424142;"></div>
<div style="left:884px;top:169px;width:1px;height:23px;background:#424142;"></div>
<div style="left:811px;top:170px;width:73px;height:1px;background:#D6D3CE;"></div>
<div style="left:811px;top:170px;width:1px;height:21px;background:#D6D3CE;"></div>
<div style="left:811px;top:190px;width:73px;height:1px;background:#848284;"></div>
<div style="left:883px;top:170px;width:1px;height:21px;background:#848284;"></div>
<span style="left:828px;top:174px;color:#000;transform-origin:0 0;transform:scaleX(0.9519);">Remove</span>
<div style="left:528px;top:297px;width:356px;height:1px;background:#848284;"></div>
<div style="left:528px;top:298px;width:357px;height:1px;background:#FFFFFF;"></div>
<div style="left:884px;top:297px;width:1px;height:2px;background:#FFFFFF;"></div>
<span style="left:527px;top:311px;color:#000;letter-spacing:0.033px;">Log format:</span>
<div style="left:528px;top:328px;width:126px;height:21px;background:#FFFFFF;"></div>
<div style="left:528px;top:328px;width:126px;height:1px;background:#848284;"></div>
<div style="left:528px;top:328px;width:1px;height:21px;background:#848284;"></div>
<div style="left:528px;top:348px;width:126px;height:1px;background:#FFFFFF;"></div>
<div style="left:653px;top:328px;width:1px;height:21px;background:#FFFFFF;"></div>
<div style="left:529px;top:329px;width:124px;height:1px;background:#424142;"></div>
<div style="left:529px;top:329px;width:1px;height:19px;background:#424142;"></div>
<div style="left:529px;top:347px;width:124px;height:1px;background:#D6D3CE;"></div>
<div style="left:652px;top:329px;width:1px;height:19px;background:#D6D3CE;"></div>
<div style="left:636px;top:330px;width:16px;height:17px;background:#D6D3CE;"></div>
<div style="left:636px;top:330px;width:16px;height:1px;background:#FFFFFF;"></div>
<div style="left:636px;top:330px;width:1px;height:17px;background:#FFFFFF;"></div>
<div style="left:636px;top:346px;width:16px;height:1px;background:#424142;"></div>
<div style="left:651px;top:330px;width:1px;height:17px;background:#424142;"></div>
<div style="left:637px;top:331px;width:14px;height:1px;background:#D6D3CE;"></div>
<div style="left:637px;top:331px;width:1px;height:15px;background:#D6D3CE;"></div>
<div style="left:637px;top:345px;width:14px;height:1px;background:#848284;"></div>
<div style="left:650px;top:331px;width:1px;height:15px;background:#848284;"></div>
<div style="left:640px;top:336px;width:7px;height:1px;background:#000;"></div>
<div style="left:641px;top:337px;width:5px;height:1px;background:#000;"></div>
<div style="left:642px;top:338px;width:3px;height:1px;background:#000;"></div>
<div style="left:643px;top:339px;width:1px;height:1px;background:#000;"></div>
<span style="left:531px;top:333px;color:#000;transform-origin:0 0;transform:scaleX(0.9619);">Binary</span>
<span style="left:527px;top:363px;color:#000;transform-origin:0 0;transform:scaleX(0.9762);">Sample interval:</span>
<div style="left:528px;top:380px;width:126px;height:23px;background:#FFFFFF;"></div>
<div style="left:528px;top:380px;width:126px;height:1px;background:#848284;"></div>
<div style="left:528px;top:380px;width:1px;height:23px;background:#848284;"></div>
<div style="left:528px;top:402px;width:126px;height:1px;background:#FFFFFF;"></div>
<div style="left:653px;top:380px;width:1px;height:23px;background:#FFFFFF;"></div>
<div style="left:529px;top:381px;width:124px;height:1px;background:#424142;"></div>
<div style="left:529px;top:381px;width:1px;height:21px;background:#424142;"></div>
<div style="left:529px;top:401px;width:124px;height:1px;background:#D6D3CE;"></div>
<div style="left:652px;top:381px;width:1px;height:21px;background:#D6D3CE;"></div>
<div style="left:637px;top:382px;width:15px;height:9px;background:#D6D3CE;"></div>
<div style="left:637px;top:382px;width:15px;height:1px;background:#FFFFFF;"></div>
<div style="left:637px;top:382px;width:1px;height:9px;background:#FFFFFF;"></div>
<div style="left:637px;top:390px;width:15px;height:1px;background:#424142;"></div>
<div style="left:651px;top:382px;width:1px;height:9px;background:#424142;"></div>
<div style="left:638px;top:383px;width:13px;height:1px;background:#D6D3CE;"></div>
<div style="left:638px;top:383px;width:1px;height:7px;background:#D6D3CE;"></div>
<div style="left:638px;top:389px;width:13px;height:1px;background:#848284;"></div>
<div style="left:650px;top:383px;width:1px;height:7px;background:#848284;"></div>
<div style="left:637px;top:391px;width:15px;height:10px;background:#D6D3CE;"></div>
<div style="left:637px;top:391px;width:15px;height:1px;background:#FFFFFF;"></div>
<div style="left:637px;top:391px;width:1px;height:10px;background:#FFFFFF;"></div>
<div style="left:637px;top:400px;width:15px;height:1px;background:#424142;"></div>
<div style="left:651px;top:391px;width:1px;height:10px;background:#424142;"></div>
<div style="left:638px;top:392px;width:13px;height:1px;background:#D6D3CE;"></div>
<div style="left:638px;top:392px;width:1px;height:8px;background:#D6D3CE;"></div>
<div style="left:638px;top:399px;width:13px;height:1px;background:#848284;"></div>
<div style="left:650px;top:392px;width:1px;height:8px;background:#848284;"></div>
<div style="left:644px;top:385px;width:1px;height:1px;background:#000;"></div>
<div style="left:643px;top:386px;width:3px;height:1px;background:#000;"></div>
<div style="left:643px;top:395px;width:3px;height:1px;background:#000;"></div>
<div style="left:644px;top:396px;width:1px;height:1px;background:#000;"></div>
<span style="left:534px;top:384px;color:#000;transform-origin:0 0;transform:scaleX(0.8980);">15</span>
<span style="left:660px;top:365px;color:#000;transform-origin:0 0;transform:scaleX(0.9600);">Units:</span>
<div style="left:660px;top:382px;width:75px;height:21px;background:#FFFFFF;"></div>
<div style="left:660px;top:382px;width:75px;height:1px;background:#848284;"></div>
<div style="left:660px;top:382px;width:1px;height:21px;background:#848284;"></div>
<div style="left:660px;top:402px;width:75px;height:1px;background:#FFFFFF;"></div>
<div style="left:734px;top:382px;width:1px;height:21px;background:#FFFFFF;"></div>
<div style="left:661px;top:383px;width:73px;height:1px;background:#424142;"></div>
<div style="left:661px;top:383px;width:1px;height:19px;background:#424142;"></div>
<div style="left:661px;top:401px;width:73px;height:1px;background:#D6D3CE;"></div>
<div style="left:733px;top:383px;width:1px;height:19px;background:#D6D3CE;"></div>
<div style="left:717px;top:384px;width:16px;height:17px;background:#D6D3CE;"></div>
<div style="left:717px;top:384px;width:16px;height:1px;background:#FFFFFF;"></div>
<div style="left:717px;top:384px;width:1px;height:17px;background:#FFFFFF;"></div>
<div style="left:717px;top:400px;width:16px;height:1px;background:#424142;"></div>
<div style="left:732px;top:384px;width:1px;height:17px;background:#424142;"></div>
<div style="left:718px;top:385px;width:14px;height:1px;background:#D6D3CE;"></div>
<div style="left:718px;top:385px;width:1px;height:15px;background:#D6D3CE;"></div>
<div style="left:718px;top:399px;width:14px;height:1px;background:#848284;"></div>
<div style="left:731px;top:385px;width:1px;height:15px;background:#848284;"></div>
<div style="left:721px;top:390px;width:7px;height:1px;background:#000;"></div>
<div style="left:722px;top:391px;width:5px;height:1px;background:#000;"></div>
<div style="left:723px;top:392px;width:3px;height:1px;background:#000;"></div>
<div style="left:724px;top:393px;width:1px;height:1px;background:#000;"></div>
<span style="left:664px;top:387px;color:#000;transform-origin:0 0;transform:scaleX(0.9109);">Seconds</span>
<div style="left:757px;top:360px;width:13px;height:13px;background:#FFFFFF;"></div>
<div style="left:757px;top:360px;width:13px;height:1px;background:#848284;"></div>
<div style="left:757px;top:360px;width:1px;height:13px;background:#848284;"></div>
<div style="left:757px;top:372px;width:13px;height:1px;background:#FFFFFF;"></div>
<div style="left:769px;top:360px;width:1px;height:13px;background:#FFFFFF;"></div>
<div style="left:758px;top:361px;width:11px;height:1px;background:#424142;"></div>
<div style="left:758px;top:361px;width:1px;height:11px;background:#424142;"></div>
<div style="left:758px;top:371px;width:11px;height:1px;background:#D6D3CE;"></div>
<div style="left:768px;top:361px;width:1px;height:11px;background:#D6D3CE;"></div>
<span style="left:774px;top:361px;color:#000;transform-origin:0 0;transform:scaleX(0.9288);">Maximum samples:</span>
<div style="left:757px;top:380px;width:126px;height:23px;background:#FFFFFF;"></div>
<div style="left:757px;top:380px;width:126px;height:1px;background:#848284;"></div>
<div style="left:757px;top:380px;width:1px;height:23px;background:#848284;"></div>
<div style="left:757px;top:402px;width:126px;height:1px;background:#FFFFFF;"></div>
<div style="left:882px;top:380px;width:1px;height:23px;background:#FFFFFF;"></div>
<div style="left:758px;top:381px;width:124px;height:1px;background:#424142;"></div>
<div style="left:758px;top:381px;width:1px;height:21px;background:#424142;"></div>
<div style="left:758px;top:401px;width:124px;height:1px;background:#D6D3CE;"></div>
<div style="left:881px;top:381px;width:1px;height:21px;background:#D6D3CE;"></div>
<div style="left:866px;top:382px;width:15px;height:9px;background:#D6D3CE;"></div>
<div style="left:866px;top:382px;width:15px;height:1px;background:#FFFFFF;"></div>
<div style="left:866px;top:382px;width:1px;height:9px;background:#FFFFFF;"></div>
<div style="left:866px;top:390px;width:15px;height:1px;background:#424142;"></div>
<div style="left:880px;top:382px;width:1px;height:9px;background:#424142;"></div>
<div style="left:867px;top:383px;width:13px;height:1px;background:#D6D3CE;"></div>
<div style="left:867px;top:383px;width:1px;height:7px;background:#D6D3CE;"></div>
<div style="left:867px;top:389px;width:13px;height:1px;background:#848284;"></div>
<div style="left:879px;top:383px;width:1px;height:7px;background:#848284;"></div>
<div style="left:866px;top:391px;width:15px;height:10px;background:#D6D3CE;"></div>
<div style="left:866px;top:391px;width:15px;height:1px;background:#FFFFFF;"></div>
<div style="left:866px;top:391px;width:1px;height:10px;background:#FFFFFF;"></div>
<div style="left:866px;top:400px;width:15px;height:1px;background:#424142;"></div>
<div style="left:880px;top:391px;width:1px;height:10px;background:#424142;"></div>
<div style="left:867px;top:392px;width:13px;height:1px;background:#D6D3CE;"></div>
<div style="left:867px;top:392px;width:1px;height:8px;background:#D6D3CE;"></div>
<div style="left:867px;top:399px;width:13px;height:1px;background:#848284;"></div>
<div style="left:879px;top:392px;width:1px;height:8px;background:#848284;"></div>
<div style="left:873px;top:385px;width:1px;height:1px;background:#000;"></div>
<div style="left:872px;top:386px;width:3px;height:1px;background:#000;"></div>
<div style="left:872px;top:395px;width:3px;height:1px;background:#000;"></div>
<div style="left:873px;top:396px;width:1px;height:1px;background:#000;"></div>
<span style="left:763px;top:384px;color:#000;transform-origin:0 0;transform:scaleX(0.9796);">0</span>
<span style="left:527px;top:419px;color:#000;transform-origin:0 0;transform:scaleX(0.9792);">Data source name:</span>
<div style="left:528px;top:435px;width:357px;height:21px;background:#D6D3CE;"></div>
<div style="left:528px;top:435px;width:357px;height:1px;background:#848284;"></div>
<div style="left:528px;top:435px;width:1px;height:21px;background:#848284;"></div>
<div style="left:528px;top:455px;width:357px;height:1px;background:#FFFFFF;"></div>
<div style="left:884px;top:435px;width:1px;height:21px;background:#FFFFFF;"></div>
<div style="left:529px;top:436px;width:355px;height:1px;background:#424142;"></div>
<div style="left:529px;top:436px;width:1px;height:19px;background:#424142;"></div>
<div style="left:529px;top:454px;width:355px;height:1px;background:#D6D3CE;"></div>
<div style="left:883px;top:436px;width:1px;height:19px;background:#D6D3CE;"></div>
<div style="left:867px;top:437px;width:16px;height:17px;background:#D6D3CE;"></div>
<div style="left:867px;top:437px;width:16px;height:1px;background:#FFFFFF;"></div>
<div style="left:867px;top:437px;width:1px;height:17px;background:#FFFFFF;"></div>
<div style="left:867px;top:453px;width:16px;height:1px;background:#424142;"></div>
<div style="left:882px;top:437px;width:1px;height:17px;background:#424142;"></div>
<div style="left:868px;top:438px;width:14px;height:1px;background:#D6D3CE;"></div>
<div style="left:868px;top:438px;width:1px;height:15px;background:#D6D3CE;"></div>
<div style="left:868px;top:452px;width:14px;height:1px;background:#848284;"></div>
<div style="left:881px;top:438px;width:1px;height:15px;background:#848284;"></div>
<div style="left:872px;top:444px;width:7px;height:1px;background:#FFFFFF;"></div>
<div style="left:873px;top:445px;width:5px;height:1px;background:#FFFFFF;"></div>
<div style="left:874px;top:446px;width:3px;height:1px;background:#FFFFFF;"></div>
<div style="left:875px;top:447px;width:1px;height:1px;background:#FFFFFF;"></div>
<div style="left:871px;top:443px;width:7px;height:1px;background:#848284;"></div>
<div style="left:872px;top:444px;width:5px;height:1px;background:#848284;"></div>
<div style="left:873px;top:445px;width:3px;height:1px;background:#848284;"></div>
<div style="left:874px;top:446px;width:1px;height:1px;background:#848284;"></div>
<div style="left:581px;top:476px;width:75px;height:1px;background:#000;"></div>
<div style="left:581px;top:476px;width:1px;height:23px;background:#000;"></div>
<div style="left:581px;top:498px;width:75px;height:1px;background:#000;"></div>
<div style="left:655px;top:476px;width:1px;height:23px;background:#000;"></div>
<div style="left:582px;top:477px;width:73px;height:21px;background:#D6D3CE;"></div>
<div style="left:582px;top:477px;width:73px;height:1px;background:#FFFFFF;"></div>
<div style="left:582px;top:477px;width:1px;height:21px;background:#FFFFFF;"></div>
<div style="left:582px;top:497px;width:73px;height:1px;background:#424142;"></div>
<div style="left:654px;top:477px;width:1px;height:21px;background:#424142;"></div>
<div style="left:583px;top:478px;width:71px;height:1px;background:#D6D3CE;"></div>
<div style="left:583px;top:478px;width:1px;height:19px;background:#D6D3CE;"></div>
<div style="left:583px;top:496px;width:71px;height:1px;background:#848284;"></div>
<div style="left:653px;top:478px;width:1px;height:19px;background:#848284;"></div>
<span style="left:611px;top:481px;color:#000;transform-origin:0 0;transform:scaleX(0.8802);">OK</span>
<div style="left:662px;top:476px;width:75px;height:23px;background:#D6D3CE;"></div>
<div style="left:662px;top:476px;width:75px;height:1px;background:#FFFFFF;"></div>
<div style="left:662px;top:476px;width:1px;height:23px;background:#FFFFFF;"></div>
<div style="left:662px;top:498px;width:75px;height:1px;background:#424142;"></div>
<div style="left:736px;top:476px;width:1px;height:23px;background:#424142;"></div>
<div style="left:663px;top:477px;width:73px;height:1px;background:#D6D3CE;"></div>
<div style="left:663px;top:477px;width:1px;height:21px;background:#D6D3CE;"></div>
<div style="left:663px;top:497px;width:73px;height:1px;background:#848284;"></div>
<div style="left:735px;top:477px;width:1px;height:21px;background:#848284;"></div>
<span style="left:682px;top:481px;color:#000;transform-origin:0 0;transform:scaleX(0.9635);">Cancel</span>
<div style="left:743px;top:476px;width:75px;height:23px;background:#D6D3CE;"></div>
<div style="left:743px;top:476px;width:75px;height:1px;background:#FFFFFF;"></div>
<div style="left:743px;top:476px;width:1px;height:23px;background:#FFFFFF;"></div>
<div style="left:743px;top:498px;width:75px;height:1px;background:#424142;"></div>
<div style="left:817px;top:476px;width:1px;height:23px;background:#424142;"></div>
<div style="left:744px;top:477px;width:73px;height:1px;background:#D6D3CE;"></div>
<div style="left:744px;top:477px;width:1px;height:21px;background:#D6D3CE;"></div>
<div style="left:744px;top:497px;width:73px;height:1px;background:#848284;"></div>
<div style="left:816px;top:477px;width:1px;height:21px;background:#848284;"></div>
<span style="left:767px;top:482px;color:#FFFFFF;letter-spacing:0.094px;">Apply</span>
<span style="left:766px;top:481px;color:#848284;letter-spacing:0.094px;">Apply</span>
<div style="left:824px;top:476px;width:75px;height:23px;background:#D6D3CE;"></div>
<div style="left:824px;top:476px;width:75px;height:1px;background:#FFFFFF;"></div>
<div style="left:824px;top:476px;width:1px;height:23px;background:#FFFFFF;"></div>
<div style="left:824px;top:498px;width:75px;height:1px;background:#424142;"></div>
<div style="left:898px;top:476px;width:1px;height:23px;background:#424142;"></div>
<div style="left:825px;top:477px;width:73px;height:1px;background:#D6D3CE;"></div>
<div style="left:825px;top:477px;width:1px;height:21px;background:#D6D3CE;"></div>
<div style="left:825px;top:497px;width:73px;height:1px;background:#848284;"></div>
<div style="left:897px;top:477px;width:1px;height:21px;background:#848284;"></div>
<span style="left:850px;top:481px;color:#000;transform-origin:0 0;transform:scaleX(0.9724);">Help</span>
</body></html>
